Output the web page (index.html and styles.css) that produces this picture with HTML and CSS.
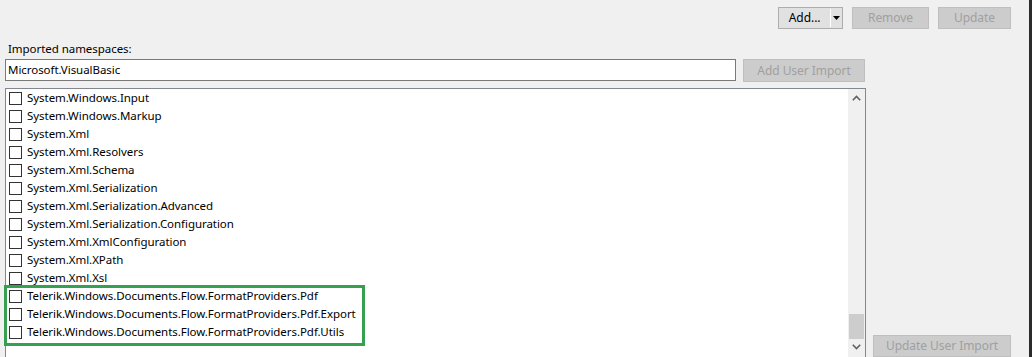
FILE: index.html
```html
<!DOCTYPE html>
<html>
<head>
<meta charset="utf-8">
<link rel="stylesheet" href="styles.css">
</head>
<body>
<div class="page">
  <div class="topbar">
    <div class="btn split">
      <span class="split-label">Add...</span>
      <span class="split-arrow"><svg width="7" height="4" viewBox="0 0 7 4"><path d="M0 0H7L3.5 4Z" fill="#000"/></svg></span>
    </div>
    <div class="btn disabled remove">Remove</div>
    <div class="btn disabled update">Update</div>
  </div>
  <div class="main">
    <div class="left">
      <div class="label">Imported namespaces:</div>
      <div class="import-row">
        <div class="textbox">Microsoft.VisualBasic</div>
        <div class="btn disabled add-import">Add User Import</div>
      </div>
      <div class="list">
        <div class="rows">
          <div class="row"><span class="cb"></span>System.Windows.Input</div>
          <div class="row"><span class="cb"></span>System.Windows.Markup</div>
          <div class="row"><span class="cb"></span>System.Xml</div>
          <div class="row"><span class="cb"></span>System.Xml.Resolvers</div>
          <div class="row"><span class="cb"></span>System.Xml.Schema</div>
          <div class="row"><span class="cb"></span>System.Xml.Serialization</div>
          <div class="row"><span class="cb"></span>System.Xml.Serialization.Advanced</div>
          <div class="row"><span class="cb"></span>System.Xml.Serialization.Configuration</div>
          <div class="row"><span class="cb"></span>System.Xml.XmlConfiguration</div>
          <div class="row"><span class="cb"></span>System.Xml.XPath</div>
          <div class="row"><span class="cb"></span>System.Xml.Xsl</div>
          <div class="row"><span class="cb"></span>Telerik.Windows.Documents.Flow.FormatProviders.Pdf</div>
          <div class="row"><span class="cb"></span>Telerik.Windows.Documents.Flow.FormatProviders.Pdf.Export</div>
          <div class="row"><span class="cb"></span>Telerik.Windows.Documents.Flow.FormatProviders.Pdf.Utils</div>
        </div>
        <div class="scrollbar">
          <div class="arrow"><svg width="9" height="6" viewBox="0 0 9 6"><path d="M0.8 5.2L4.5 1.5L8.2 5.2" fill="none" stroke="#606060" stroke-width="1.6"/></svg></div>
          <div class="track"><div class="thumb"></div></div>
          <div class="arrow down"><svg width="9" height="6" viewBox="0 0 9 6"><path d="M0.8 0.8L4.5 4.5L8.2 0.8" fill="none" stroke="#606060" stroke-width="1.6"/></svg></div>
        </div>
        <div class="highlight"></div>
      </div>
    </div>
    <div class="side">
      <div class="btn disabled update-import">Update User Import</div>
    </div>
  </div>
</div>
</body>
</html>
```
FILE: styles.css
```css
html, body {
  margin: 0;
  padding: 0;
  height: 357px;
  overflow: hidden;
}
body {
  background: #f0f0f0;
  font-family: "Noto Sans", "Open Sans", sans-serif;
  font-size: 11.5px;
  letter-spacing: -0.05px;
  color: #000;
}
.page {
  width: 1029px;
  height: 357px;
  border-right: 3px solid #2b2b2b;
  box-sizing: content-box;
}
.topbar {
  display: flex;
  justify-content: flex-end;
  gap: 9px;
  padding: 7px 18px 0 0;
  height: 22px;
}
.btn {
  box-sizing: border-box;
  height: 22px;
  border: 1px solid #adadad;
  background: #e1e1e1;
  display: flex;
  align-items: center;
  justify-content: center;
  line-height: 1;
  font-size: 12px;
}
.btn.disabled {
  background: #cccccc;
  border-color: #bfbfbf;
  color: #a0a0a0;
}
.split {
  width: 65px;
  justify-content: flex-start;
  padding: 0;
}
.split-label {
  width: 52px;
  text-align: center;
}
.split-arrow {
  border-left: 1px solid #fff;
  height: 18px;
  width: 11px;
  display: flex;
  align-items: center;
  justify-content: center;
}
.remove { width: 77px; }
.update { width: 73px; }
.main {
  display: flex;
  margin-top: 12px;
}
.left {
  margin-left: 5px;
  width: 861px;
}
.label {
  height: 16px;
  line-height: 16px;
  padding-left: 3px;
}
.import-row {
  display: flex;
  gap: 7px;
  margin-top: 2px;
}
.textbox {
  box-sizing: border-box;
  width: 731px;
  height: 22px;
  border: 1px solid #7a7a7a;
  background: #fff;
  padding-left: 2px;
  line-height: 19px;
}
.add-import { width: 122px; height: 23px; }
.list {
  position: relative;
  margin-top: 6px;
  height: 274px;
  border: 1px solid #828790;
  background: #fff;
  display: flex;
}
.rows {
  flex: 1;
  padding-top: 0;
}
.row {
  height: 18px;
  display: flex;
  align-items: center;
  white-space: nowrap;
  line-height: 16px;
}
.cb {
  box-sizing: border-box;
  width: 13px;
  height: 13px;
  border: 1px solid #333;
  background: #fff;
  margin: 1px 5px 0 3px;
  flex: none;
}
.scrollbar {
  width: 17px;
  background: #f0f0f0;
  display: flex;
  flex-direction: column;
}
.arrow {
  height: 17px;
  display: flex;
  align-items: center;
  justify-content: center;
}
.arrow.down {
  height: 16px;
  margin-bottom: 8px;
}
.track {
  flex: 1;
  display: flex;
  flex-direction: column;
  justify-content: flex-end;
  padding: 0 1px;
}
.thumb {
  height: 25px;
  background: #cdcdcd;
}
.highlight {
  position: absolute;
  left: -2px;
  top: 196px;
  width: 355px;
  height: 55px;
  border: 3px solid #34a050;
}
.side {
  display: flex;
  flex-direction: column;
  justify-content: flex-end;
  padding-left: 7px;
  padding-bottom: 7px;
}
.update-import {
  width: 138px;
}
```
